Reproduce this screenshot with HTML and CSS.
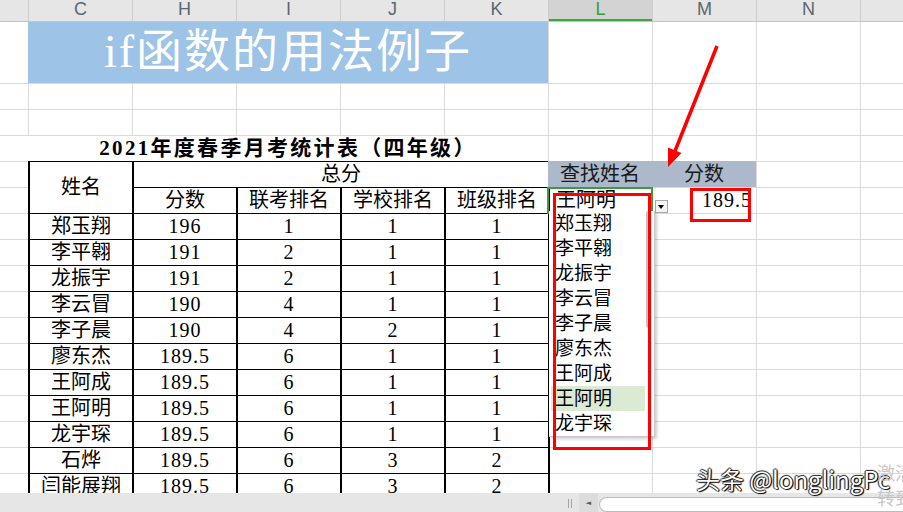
FILE: index.html
```html
<!DOCTYPE html>
<html lang="zh-CN">
<head>
    <meta charset="UTF-8">
    <meta name="viewport" content="width=device-width, initial-scale=1.0">
    <title>if函数的用法例子</title>
    <link rel="stylesheet" href="styles.css">
</head>
<body>
    <div class="window">
        <div class="col-heads">
            <div class="col-head"></div>
            <div class="col-head">C</div>
            <div class="col-head">H</div>
            <div class="col-head">I</div>
            <div class="col-head">J</div>
            <div class="col-head">K</div>
            <div class="col-head selected">L</div>
            <div class="col-head">M</div>
            <div class="col-head">N</div>
            <div class="col-head"></div>
        </div>

        <div class="sheet">
            <div class="title-row">
                <div class="title-cell">if函数的用法例子</div>
            </div>

            <div class="grid">
                <div class="report-title">2021年度春季月考统计表（四年级）</div>

                <table class="scores">
                    <colgroup>
                        <col><col><col><col><col>
                    </colgroup>
                    <tr>
                        <td rowspan="2">姓名</td>
                        <td colspan="4">总分</td>
                    </tr>
                    <tr>
                        <td>分数</td>
                        <td>联考排名</td>
                        <td>学校排名</td>
                        <td>班级排名</td>
                    </tr>
                    <tr><td>郑玉翔</td><td class="num">196</td><td class="num">1</td><td class="num">1</td><td class="num">1</td></tr>
                    <tr><td>李平翱</td><td class="num">191</td><td class="num">2</td><td class="num">1</td><td class="num">1</td></tr>
                    <tr><td>龙振宇</td><td class="num">191</td><td class="num">2</td><td class="num">1</td><td class="num">1</td></tr>
                    <tr><td>李云冒</td><td class="num">190</td><td class="num">4</td><td class="num">1</td><td class="num">1</td></tr>
                    <tr><td>李子晨</td><td class="num">190</td><td class="num">4</td><td class="num">2</td><td class="num">1</td></tr>
                    <tr><td>廖东杰</td><td class="num">189.5</td><td class="num">6</td><td class="num">1</td><td class="num">1</td></tr>
                    <tr><td>王阿成</td><td class="num">189.5</td><td class="num">6</td><td class="num">1</td><td class="num">1</td></tr>
                    <tr><td>王阿明</td><td class="num">189.5</td><td class="num">6</td><td class="num">1</td><td class="num">1</td></tr>
                    <tr><td>龙宇琛</td><td class="num">189.5</td><td class="num">6</td><td class="num">1</td><td class="num">1</td></tr>
                    <tr><td>石烨</td><td class="num">189.5</td><td class="num">6</td><td class="num">3</td><td class="num">2</td></tr>
                    <tr><td>闫能展翔</td><td class="num">189.5</td><td class="num">6</td><td class="num">3</td><td class="num">2</td></tr>
                </table>

                <div class="lookup">
                    <div class="lookup-head">
                        <div>查找姓名</div>
                        <div>分数</div>
                    </div>
                    <div class="lookup-row">
                        <div class="active-cell">
                            王阿明
                            <span class="drop-btn"></span>
                            <ul class="drop-list">
                                <li>郑玉翔</li>
                                <li>李平翱</li>
                                <li>龙振宇</li>
                                <li>李云冒</li>
                                <li>李子晨</li>
                                <li>廖东杰</li>
                                <li>王阿成</li>
                                <li class="hover">王阿明</li>
                                <li>龙宇琛</li>
                                <span class="drop-thumb"></span>
                            </ul>
                        </div>
                        <div class="result-cell num">189.5</div>
                    </div>
                </div>
            </div>
        </div>

        <div class="status-bar">
            <div class="tabs"></div>
            <span class="grip"></span>
            <span class="scroll-btn">◄</span>
            <span class="scroll-track"></span>
        </div>

        <!-- annotations drawn over the screenshot -->
        <div class="mark mark-list"></div>
        <div class="mark mark-score"></div>
        <svg class="arrow" viewBox="660 40 66 132">
            <line x1="717" y1="46" x2="675" y2="151" stroke="#ff0000" stroke-width="3.5"/>
            <polygon points="668,167 681.5,153 668,147.5" fill="#ff0000"/>
        </svg>

        <div class="watermark">头条 @longlingPc</div>
        <div class="activate">激活 Windows<br>转到“设置”以激活 Windows。</div>
    </div>
</body>
</html>
```

FILE: styles.css
```css
body {
    margin: 0;
    background-color: #fff;
    overflow: hidden;
}

.window {
    position: relative;
    width: 903px;
    height: 512px;
    display: flex;
    flex-direction: column;
    overflow: hidden;
    font-family: "Liberation Serif", "Noto Sans CJK SC", serif;
    color: #000;
}

/* column letters */
.col-heads {
    display: grid;
    grid-template-columns: 28px repeat(8, 104px) 1fr;
    height: 21px;
    flex-shrink: 0;
    background-color: #e6e6e6;
    border-bottom: 1px solid #c4c4c4;
    font-family: "Liberation Sans", Arial, sans-serif;
    font-size: 18px;
    line-height: 18px;
    color: #5c6670;
}

.col-head {
    text-align: center;
    border-left: 1px solid #cdcdcd;
}

.col-head:first-child {
    border-left: none;
}

.col-head.selected {
    background-color: #d3d3d3;
    color: #3b9a3b;
    box-shadow: inset 0 -2px #3fa33f;
}

/* cells */
.sheet {
    flex: 1;
    position: relative;
    overflow: hidden;
    background-image: linear-gradient(to right, #dadada 1px, transparent 1px);
    background-size: 104px 100%;
    background-position: 28px 0;
}

.title-row {
    display: grid;
    grid-template-columns: 28px 520px 1fr;
    height: 61px;
}

.title-cell {
    grid-column: 2;
    background-color: #9dc3e6;
    color: #fff;
    font-size: 46px;
    letter-spacing: 2px;
    line-height: 60px;
    text-align: center;
}

.grid {
    display: grid;
    grid-template-columns: 28px repeat(8, 104px) 1fr;
    grid-template-rows: repeat(16, 26px);
    height: 410px;
    background-image: linear-gradient(to bottom, #dadada 1px, transparent 1px);
    background-size: 100% 26px;
}

.report-title {
    grid-column: 2 / 7;
    grid-row: 3;
    align-self: end;
    height: 25px;
    background-color: #fff;
    font-size: 21px;
    font-weight: bold;
    letter-spacing: 2.3px;
    line-height: 25px;
    text-align: center;
}

.scores {
    grid-column: 2 / 7;
    grid-row: 4 / span 13;
    align-self: start;
    width: 522px;
    table-layout: fixed;
    border-collapse: separate;
    border-spacing: 0;
    border-top: 1px solid #000;
    border-right: 2px solid #000;
    background-color: #fff;
}

.scores td {
    height: 25px;
    padding: 0;
    border-left: 2px solid #000;
    border-bottom: 1px solid #000;
    font-size: 20px;
    line-height: 25px;
    text-align: center;
    white-space: nowrap;
    overflow: hidden;
}

.num {
    letter-spacing: 1px;
}

/* lookup block */
.lookup {
    grid-column: 7 / 9;
    grid-row: 4 / span 2;
    font-size: 20px;
}

.lookup-head {
    display: grid;
    grid-template-columns: 1fr 1fr;
    height: 26px;
    background-color: #acb9ca;
    color: #1a1a1a;
    line-height: 26px;
    text-align: center;
}

.lookup-row {
    display: grid;
    grid-template-columns: 1fr 1fr;
    height: 25px;
    margin-top: 1px;
    line-height: 25px;
}

.active-cell {
    position: relative;
    padding-left: 8px;
    outline: 2px solid #3c9c3c;
    outline-offset: -1px;
    z-index: 2;
}

.drop-btn {
    position: absolute;
    left: 107px;
    top: 12px;
    width: 11px;
    height: 11px;
    background-color: #f4f4f4;
    border: 1px solid #a8a8a8;
}

.drop-btn::after {
    content: "";
    position: absolute;
    left: 2px;
    top: 4px;
    border-left: 3.5px solid transparent;
    border-right: 3.5px solid transparent;
    border-top: 4px solid #000;
}

.drop-list {
    position: absolute;
    left: 1px;
    top: 23px;
    width: 105px;
    height: 225px;
    margin: 0;
    padding: 0;
    list-style: none;
    background-color: #fff;
    border-right: 1px solid #c8c8c8;
    border-bottom: 1px solid #c8c8c8;
    box-shadow: 2px 2px 3px rgba(0, 0, 0, 0.2);
    font-size: 19px;
    line-height: 25px;
}

.drop-list li {
    width: 90px;
    margin-left: 2px;
    padding-left: 4px;
}

.drop-list li.hover {
    background-color: #dbead3;
}

.drop-thumb {
    position: absolute;
    right: 3px;
    top: 0;
    width: 5px;
    height: 117px;
    background-color: #c2c2c2;
    border-radius: 2px;
}

.result-cell {
    padding-right: 4px;
    text-align: right;
}

/* bottom scroll bar */
.status-bar {
    display: flex;
    align-items: stretch;
    height: 19px;
    flex-shrink: 0;
    background-color: #e6e6e6;
}

.tabs {
    width: 568px;
}

.grip {
    width: 2px;
    height: 9px;
    margin-top: 6px;
    border-left: 1px solid #a4a4a4;
    border-right: 1px solid #a4a4a4;
}

.scroll-btn {
    width: 19px;
    margin-left: 7px;
    background-color: #dcdcdc;
    color: #5a5a5a;
    font-family: "DejaVu Sans", sans-serif;
    font-size: 7px;
    line-height: 20px;
    text-align: center;
}

.scroll-track {
    flex: 1;
    height: 13px;
    margin-top: 4px;
    margin-left: 1px;
    background-color: #fff;
    border: 1px solid #bcbcbc;
    border-right: none;
    border-radius: 8px 0 0 8px;
}

/* annotations */
.mark {
    position: absolute;
    box-sizing: border-box;
    border: 3px solid #ff0000;
    z-index: 5;
}

.mark-list {
    left: 553px;
    top: 193px;
    width: 98px;
    height: 257px;
}

.mark-score {
    left: 690px;
    top: 188px;
    width: 61px;
    height: 34px;
}

.arrow {
    position: absolute;
    left: 660px;
    top: 40px;
    width: 66px;
    height: 132px;
    z-index: 5;
}

.watermark {
    position: absolute;
    left: 696px;
    top: 464px;
    font-family: "Noto Sans CJK SC", sans-serif;
    font-size: 24px;
    line-height: 30px;
    color: #fff;
    white-space: nowrap;
    text-shadow: 1px 1px 1px #000, -1px 0 1px #222, 0 -1px 1px #222, 1px 0 1px #222;
    z-index: 6;
}

.activate {
    position: absolute;
    left: 877px;
    top: 460px;
    font-family: "Noto Sans CJK SC", sans-serif;
    font-size: 18px;
    line-height: 25px;
    color: #c8c8c8;
    white-space: nowrap;
    z-index: 6;
}
```
